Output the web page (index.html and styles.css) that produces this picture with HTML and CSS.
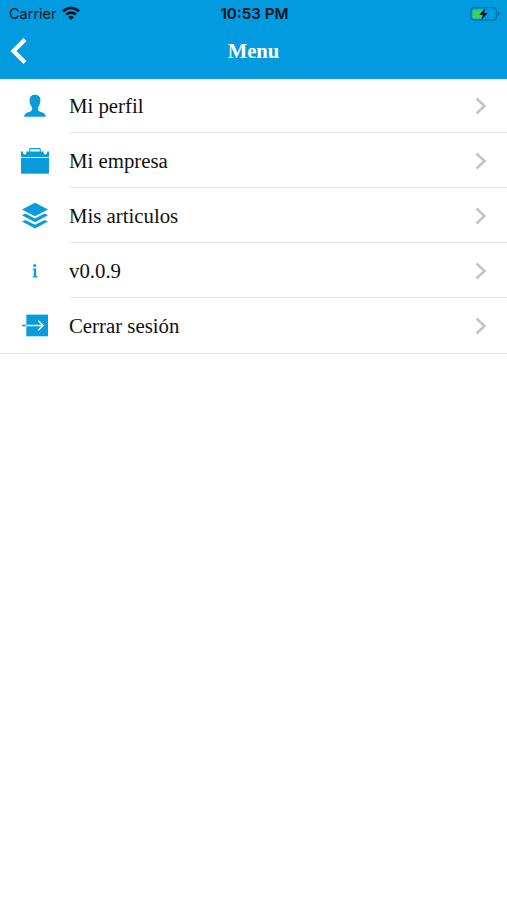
FILE: index.html
```html
<!DOCTYPE html>
<html lang="es">
<head>
    <meta charset="UTF-8">
    <meta name="viewport" content="width=device-width, initial-scale=1.0">
    <title>Menu</title>
    <link rel="stylesheet" href="styles.css">
</head>
<body>
    <header class="header">
        <div class="status-bar">
            <div class="carrier">
                <span>Carrier</span>
                <svg class="wifi" width="18" height="14" viewBox="0 0 18 14" fill="none" stroke="currentColor" stroke-width="2.7">
                    <path d="M1 5.2a11.6 11.6 0 0 1 16 0"/>
                    <path d="M4 8.6a7.4 7.4 0 0 1 10 0"/>
                    <path d="M6.2 11.2a4 4 0 0 1 5.6 0L9 14z" fill="currentColor" stroke="none"/>
                </svg>
            </div>
            <span class="time">10:53 PM</span>
            <svg class="battery" width="30" height="14" viewBox="0 0 30 14">
                <rect x=".9" y=".7" width="25.6" height="12.4" rx="3.2" fill="none" stroke="#0870a5" stroke-width="1.2"/>
                <path d="M4 2.5h9L10 8h2l-1 3.5H4A1.5 1.5 0 0 1 2.5 10V4A1.5 1.5 0 0 1 4 2.5z" fill="#3bd15c"/>
                <path d="M28 4.5v5q1.600-.8 1.600-2.500T28 4.500z" fill="#0870a5"/>
                <path d="M15.500 1.200L9.300 7.800h3.700l-1.500 5L17.700 6h-3.700z" fill="#06141c"/>
            </svg>
        </div>
        <nav class="nav-bar">
            <a class="back" href="#" aria-label="Volver">
                <svg width="18" height="28" viewBox="0 0 18 28" fill="none" stroke="#fff" stroke-width="4.2">
                    <path d="M16 2.500L4.500 14 16 25.500"/>
                </svg>
            </a>
            <h1>Menu</h1>
        </nav>
    </header>

    <ul class="menu">
        <li class="menu-item">
            <span class="icon">
                <svg width="30" height="30" viewBox="0 0 30 30" fill="currentColor">
                    <path d="M15 3.800c-3.400 0-5.400 2-5.400 5.400 0 3.300.9 5.300 2.300 6.900.6 2.300.2 3.500-1.100 4.200-2.300 1.200-6.300 1.200-6.700 5.500h21.800c-.4-4.300-4.400-4.300-6.700-5.500-1.300-.7-1.700-1.900-1.100-4.200 1.400-1.600 2.300-3.600 2.300-6.900 0-3.400-2-5.400-5.400-5.400z"/>
                </svg>
            </span>
            <span class="label">Mi perfil</span>
            <svg class="chevron" viewBox="0 0 12 18"><path d="M1.500 1.500L9.500 9l-8 7.500"/></svg>
        </li>
        <li class="menu-item">
            <span class="icon">
                <svg width="30" height="30" viewBox="0 0 30 30" fill="currentColor">
                    <path d="M9.700 5.800V3.900q0-1.200 1.200-1.200h8.200q1.200 0 1.200 1.200v1.900" fill="none" stroke="currentColor" stroke-width="1.200"/>
                    <path d="M1 5.600h2v1.200a1.700 1.700 0 0 0 3.400 0V5.600h17.200v1.200a1.700 1.700 0 0 0 3.400 0V5.600h2v5.500H1z"/>
                    <path d="M1 12h28v15.700H1z"/>
                </svg>
            </span>
            <span class="label">Mi empresa</span>
            <svg class="chevron" viewBox="0 0 12 18"><path d="M1.500 1.500L9.500 9l-8 7.500"/></svg>
        </li>
        <li class="menu-item">
            <span class="icon">
                <svg width="30" height="30" viewBox="0 0 30 30" fill="currentColor">
                    <path d="M15 1.800l13 6.800-13 6.600L2 8.600z"/>
                    <path d="M2 14.200l3.400-1.700L15 17.400l9.600-4.900 3.400 1.700-13 7z"/>
                    <path d="M2 20.600l3.400-1.700L15 23.800l9.600-4.900 3.400 1.700-13 7z"/>
                </svg>
            </span>
            <span class="label">Mis articulos</span>
            <svg class="chevron" viewBox="0 0 12 18"><path d="M1.500 1.500L9.500 9l-8 7.500"/></svg>
        </li>
        <li class="menu-item">
            <span class="icon">
                <svg width="30" height="30" viewBox="0 0 30 30" fill="currentColor">
                    <circle cx="14.700" cy="9.500" r="1.500"/>
                    <path d="M12.800 12.400h3.400v7.800h1.200v1.300h-4.700v-1.300h1.100v-6.500h-1z"/>
                </svg>
            </span>
            <span class="label">v0.0.9</span>
            <svg class="chevron" viewBox="0 0 12 18"><path d="M1.500 1.500L9.500 9l-8 7.500"/></svg>
        </li>
        <li class="menu-item">
            <span class="icon">
                <svg width="30" height="30" viewBox="0 0 30 30" fill="none">
                    <path d="M6.300 3.600H28v21.700H6.300z" fill="currentColor"/>
                    <path d="M2 14.500h4.300" stroke="currentColor" stroke-width="1.500"/>
                    <path d="M6.300 14.500H23M18.300 9.800l4.700 4.700-4.700 4.700" stroke="#fff" stroke-width="1.500"/>
                </svg>
            </span>
            <span class="label">Cerrar sesión</span>
            <svg class="chevron" viewBox="0 0 12 18"><path d="M1.500 1.500L9.500 9l-8 7.500"/></svg>
        </li>
    </ul>
</body>
</html>
```
FILE: styles.css
```css
* {
    box-sizing: border-box;
}
body {
    margin: 0;
    min-height: 100vh;
    background-color: #fff;
    color: #111;
    font-family: "Liberation Serif", "Times New Roman", serif;
}
.header {
    height: 79px;
    background-color: #029bdf;
}
.status-bar {
    display: grid;
    grid-template-columns: 1fr auto 1fr;
    align-items: center;
    height: 27px;
    padding: 0 7px 0 9px;
    color: #06141c;
    font-family: Inter, sans-serif;
    font-size: 14.5px;
}
.carrier {
    display: flex;
    align-items: center;
    gap: 5px;
}
.wifi {
    margin-top: -2px;
}
.time {
    font-size: 15.2px;
    font-weight: 600;
    line-height: 18px;
}
.battery {
    justify-self: end;
}
.nav-bar {
    display: grid;
    grid-template-columns: 1fr auto 1fr;
    align-items: center;
    height: 48px;
    padding: 0 9px;
}
.back {
    display: flex;
}
.nav-bar h1 {
    margin: 0;
    color: #fff;
    font-size: 20.7px;
    font-weight: bold;
}
.menu {
    margin: 0;
    padding: 0;
    list-style: none;
    border-bottom: 1px solid #e8e8e8;
}
.menu-item {
    display: flex;
    align-items: center;
    height: 55px;
    padding-left: 20px;
}
.menu-item:first-child {
    height: 54px;
}
/* separators start at the label, the last row closes the list full width */
.menu-item:not(:last-child) {
    background: linear-gradient(#e8e8e8, #e8e8e8) 69px 100% / 100% 1px no-repeat;
}
.icon {
    display: flex;
    width: 49px;
    color: #0a9bdc;
}
.label {
    flex: 1;
    font-size: 20.8px;
}
.chevron {
    width: 12px;
    height: 18px;
    margin-right: 20px;
    fill: none;
    stroke: #c4c4c7;
    stroke-width: 2.6;
}
```
